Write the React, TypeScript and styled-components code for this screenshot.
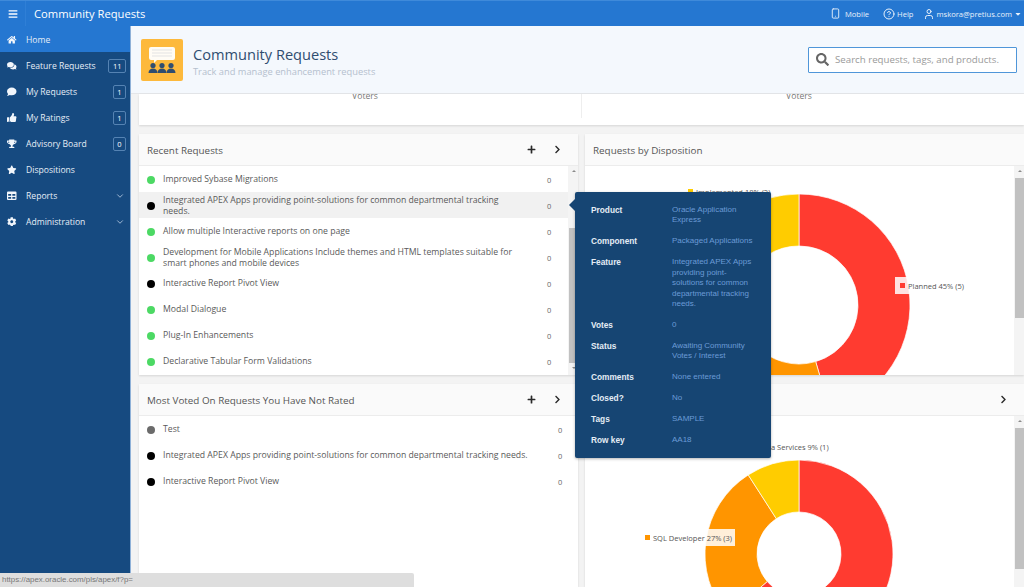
import React from "react";
import styled, { createGlobalStyle } from "styled-components";
import {
  FaHome, FaComments, FaComment, FaThumbsUp, FaTrophy, FaStar, FaTable, FaCog, FaBars, FaSearch, FaPlus, FaChevronRight, FaCaretDown,
} from "react-icons/fa";
import { LuChevronDown, LuCircleHelp, LuSmartphone, LuUser } from "react-icons/lu";

const Global = createGlobalStyle`
  html, body { margin: 0; padding: 0; height: 100%; overflow: hidden; }
  body { font-family: "Open Sans", "Liberation Sans", sans-serif; background: #f4f4f4; color: #404040; }
  * { box-sizing: border-box; }
`;

const Page = styled.div`
  width: 1024px;
  height: 587px;
  display: flex;
  flex-direction: column;
  overflow: hidden;
  position: relative;
`;

const TopBar = styled.header`
  height: 26px;
  flex-shrink: 0;
  display: flex;
  align-items: center;
  padding-right: 2px;
  background: #2577d1;
  color: #fff;
  border-top: 1px solid #3f8ada;
`;

const MenuToggle = styled.div`
  width: 26px;
  height: 25px;
  display: flex;
  align-items: center;
  justify-content: center;
  font-size: 10px;
  border-right: 1px solid #2f7fd6;
`;

const AppName = styled.div`
  margin-left: 8px;
  font-size: 11.2px;
  flex: 1;
`;

const TopLink = styled.div<{ $gap?: number }>`
  display: flex;
  align-items: center;
  gap: 2px;
  font-size: 7.6px;
  margin-right: ${(p) => p.$gap ?? 0}px;
  color: #e8f1fb;
`;

const Body = styled.div`
  flex: 1;
  display: flex;
  min-height: 0;
`;

const Sidebar = styled.nav`
  width: 131px;
  flex-shrink: 0;
  background: #164a80;
  border-right: 1px solid #8fb1d8;
`;

const NavItem = styled.div<{ $active?: boolean }>`
  height: 26px;
  display: flex;
  align-items: center;
  padding: 1px 4px 0 7px;
  color: #e6eef7;
  font-size: 8.6px;
  background: ${(p) => (p.$active ? "#2577d1" : "transparent")};
`;

const NavIcon = styled.span`
  width: 19px;
  display: flex;
  font-size: 9.5px;
  color: #f2f6fb;
`;

const NavLabel = styled.span`
  flex: 1;
`;

const NavBadge = styled.span`
  min-width: 12px;
  height: 14px;
  padding: 0 3.5px;
  border: 1px solid #5583b3;
  border-radius: 2px;
  font-size: 7.5px;
  line-height: 12px;
  text-align: center;
  color: #fff;
`;

const NavCaret = styled.span`
  display: flex;
  margin-right: 1px;
  font-size: 10px;
  color: #b8cde3;
`;

const Main = styled.main`
  flex: 1;
  min-width: 0;
  display: flex;
  flex-direction: column;
  background: #f3f3f3;
`;

const Hero = styled.div`
  height: 68px;
  flex-shrink: 0;
  display: flex;
  align-items: center;
  padding: 0 7px 0 10px;
  background: #f4f8fd;
  border-bottom: 1px solid #e4e6e9;
`;

const HeroIcon = styled.div`
  width: 42px;
  height: 42px;
  flex-shrink: 0;
  border-radius: 2px;
  background: #fdb93c;
  display: flex;
  align-items: center;
  justify-content: center;
`;

const HeroText = styled.div`
  margin: 2px 0 0 10px;
  flex: 1;
`;

const HeroTitle = styled.div`
  font-size: 14.6px;
  line-height: 22px;
  color: #2f4d70;
`;

const HeroSub = styled.div`
  font-size: 9.3px;
  line-height: 13px;
  color: #b4c0ce;
`;

const SearchBox = styled.div`
  width: 209px;
  height: 26px;
  display: flex;
  align-items: center;
  gap: 6px;
  padding-left: 7px;
  background: #fff;
  border: 1px solid #4f96d9;
  border-radius: 1px;
  font-size: 9.7px;
  color: #9a9a9a;
  white-space: nowrap;
  svg { color: #666; font-size: 13px; }
`;

const Content = styled.div`
  flex: 1;
  min-height: 0;
  padding: 0 0 0 8px;
  display: flex;
  flex-direction: column;
  gap: 9px;
`;

const StatsCard = styled.div`
  height: 31px;
  flex-shrink: 0;
  display: grid;
  grid-template-columns: 443px 1fr;
  background: #fff;
  box-shadow: 0 1px 2px rgba(0, 0, 0, 0.12);
`;

const StatCell = styled.div<{ $divider?: boolean }>`
  text-align: center;
  font-size: 8.6px;
  line-height: 4px;
  color: #777;
  height: 24px;
  padding: ${(p) => (p.$divider ? "0 0 0 10px" : "0 8px 0 0")};
  border-right: ${(p) => (p.$divider ? "1px solid #eee" : "none")};
  overflow: hidden;
`;

const Columns = styled.div`
  flex: 1;
  min-height: 0;
  display: grid;
  grid-template-columns: 439px 1fr;
  grid-template-rows: 241px 1fr;
  column-gap: 7px;
  row-gap: 9px;
`;

const Card = styled.section`
  position: relative;
  background: #fff;
  display: flex;
  flex-direction: column;
  min-height: 0;
  overflow: hidden;
  box-shadow: 0 1px 2px rgba(0, 0, 0, 0.12);
`;

const CardHead = styled.div`
  height: 32px;
  flex-shrink: 0;
  display: flex;
  align-items: center;
  padding: 0 16px 0 8px;
  background: #fafafa;
  border-bottom: 1px solid #ececec;
`;

const CardTitle = styled.h2`
  flex: 1;
  margin: 0;
  font-size: 9.85px;
  font-weight: 400;
  color: #555;
`;

const HeadIcon = styled.span`
  display: flex;
  margin-left: 17px;
  font-size: 9px;
  color: #2a2a2a;
`;

const CardBody = styled.div`
  flex: 1;
  min-height: 0;
  display: flex;
  position: relative;
  overflow: hidden;
`;

const List = styled.div`
  flex: 1;
  min-width: 0;
`;

const Row = styled.div<{ $hover?: boolean }>`
  height: 26px;
  display: flex;
  align-items: center;
  padding: 1px 0 0 8px;
  background: ${(p) => (p.$hover ? "#f1f1f1" : "transparent")};
`;

const Dot = styled.span<{ $color: string }>`
  width: 8px;
  height: 8px;
  flex-shrink: 0;
  border-radius: 50%;
  background: ${(p) => p.$color};
  margin-right: 8px;
`;

const RowText = styled.div<{ $gap?: number }>`
  flex: 1;
  min-width: 0;
  margin-right: ${(p) => p.$gap ?? 0}px;
  font-size: 8.7px;
  line-height: 10.4px;
  color: #5a5a5a;
`;

const RowCount = styled.div<{ $wide: number }>`
  width: ${(p) => p.$wide}px;
  flex-shrink: 0;
  font-size: 7.5px;
  color: #666;
`;

const Scroll = styled.div`
  width: 10px;
  flex-shrink: 0;
  display: flex;
  flex-direction: column;
  padding-left: 1px;
  background: #f4f4f4;
`;

const ScrollArrow = styled.div<{ $down?: boolean }>`
  height: 12px;
  flex-shrink: 0;
  position: relative;
  &::after {
    content: "";
    position: absolute;
    left: 3px;
    top: 4px;
    border-left: 2px solid transparent;
    border-right: 2px solid transparent;
    ${(p) => (p.$down ? "border-top: 2px solid #8a8a8a;" : "border-bottom: 2px solid #8a8a8a;")}
  }
`;

const ScrollTrack = styled.div`
  flex: 1;
  min-height: 0;
  display: flex;
  flex-direction: column;
`;

const ScrollGap = styled.div<{ $h: number }>`
  height: ${(p) => p.$h}px;
  flex-shrink: 0;
`;

const ScrollThumb = styled.div<{ $h: number }>`
  height: ${(p) => p.$h}px;
  flex-shrink: 0;
  background: #c1c1c1;
`;

const ChartArea = styled.div`
  flex: 1;
  min-width: 0;
  position: relative;
  overflow: hidden;
`;

const ChartLabel = styled.div<{ $x: number; $y: number; $bg?: boolean }>`
  position: absolute;
  left: ${(p) => p.$x}px;
  top: ${(p) => p.$y}px;
  display: flex;
  align-items: center;
  gap: 3px;
  height: 17px;
  padding: 0 3px 0 5px;
  font-size: 7.5px;
  white-space: nowrap;
  color: #555;
  background: ${(p) => (p.$bg ? "rgba(255,255,255,0.85)" : "transparent")};
`;

const Swatch = styled.span<{ $color: string }>`
  width: 5px;
  height: 5px;
  background: ${(p) => p.$color};
`;

const Pop = styled.aside`
  position: absolute;
  left: 575px;
  top: 192px;
  width: 196px;
  height: 266px;
  padding: 13px 16px 0;
  background: #164573;
  border-radius: 2px;
  box-shadow: 0 1px 3px rgba(0, 0, 0, 0.3);
  font-family: "Liberation Sans", Arial, sans-serif;
  line-height: 10.4px;
  &::before {
    content: "";
    position: absolute;
    left: -6px;
    top: 7px;
    border-top: 6px solid transparent;
    border-bottom: 6px solid transparent;
    border-right: 6px solid #164573;
  }
`;

const PopRow = styled.div`
  display: grid;
  grid-template-columns: 81px 1fr;
  margin-bottom: 10.6px;
`;

const PopKey = styled.div`
  font-size: 8.3px;
  color: #e4ecf5;
  font-weight: 700;
`;

const PopVal = styled.div`
  font-size: 8px;
  color: #6b9bd6;
`;

const StatusBubble = styled.div`
  position: absolute;
  left: 0;
  bottom: 0;
  width: 414px;
  height: 14px;
  padding-left: 2px;
  background: #dedede;
  border-top-right-radius: 2px;
  font-family: "Liberation Sans", Arial, sans-serif;
  font-size: 7.9px;
  line-height: 14px;
  color: #777;
`;

type Slice = { from: number; to: number; color: string };

const polar = (cx: number, cy: number, r: number, deg: number) => {
  const a = (deg * Math.PI) / 180;
  return [cx + r * Math.sin(a), cy - r * Math.cos(a)];
};

const slicePath = (cx: number, cy: number, r: number, inner: number, s: Slice) => {
  const [x1, y1] = polar(cx, cy, r, s.from);
  const [x2, y2] = polar(cx, cy, r, s.to);
  const [x3, y3] = polar(cx, cy, inner, s.to);
  const [x4, y4] = polar(cx, cy, inner, s.from);
  const large = s.to - s.from > 180 ? 1 : 0;
  return `M${x1} ${y1}A${r} ${r} 0 ${large} 1 ${x2} ${y2}L${x3} ${y3}A${inner} ${inner} 0 ${large} 0 ${x4} ${y4}Z`;
};

const Donut = ({ cx, cy, r, inner, w, h, slices }: { cx: number; cy: number; r: number; inner: number; w: number; h: number; slices: Slice[] }) => (
  <svg width={w} height={h} style={{ display: "block" }}>
    {slices.map((s) => (
      <path key={s.from} d={slicePath(cx, cy, r, inner, s)} fill={s.color} stroke="#fff" strokeWidth={0.7} />
    ))}
  </svg>
);

const RED = "#ff3b30";
const ORANGE = "#ff9500";
const GOLD = "#ffcc00";

const navItems = [
  { icon: <FaHome />, label: "Home", active: true },
  { icon: <FaComments />, label: "Feature Requests", badge: "11" },
  { icon: <FaComment />, label: "My Requests", badge: "1" },
  { icon: <FaThumbsUp />, label: "My Ratings", badge: "1" },
  { icon: <FaTrophy />, label: "Advisory Board", badge: "0" },
  { icon: <FaStar />, label: "Dispositions" },
  { icon: <FaTable />, label: "Reports", caret: true },
  { icon: <FaCog />, label: "Administration", caret: true },
];

const recent = [
  { text: "Improved Sybase Migrations", color: "#4cd964" },
  { text: "Integrated APEX Apps providing point-solutions for common departmental tracking needs.", color: "#000", hover: true },
  { text: "Allow multiple Interactive reports on one page", color: "#4cd964" },
  { text: "Development for Mobile Applications Include themes and HTML templates suitable for smart phones and mobile devices", color: "#4cd964" },
  { text: "Interactive Report Pivot View", color: "#000" },
  { text: "Modal Dialogue", color: "#4cd964" },
  { text: "Plug-In Enhancements", color: "#4cd964" },
  { text: "Declarative Tabular Form Validations", color: "#4cd964" },
];

const voted = [
  { text: "Test", color: "#6b6b6b" },
  { text: "Integrated APEX Apps providing point-solutions for common departmental tracking needs.", color: "#000" },
  { text: "Interactive Report Pivot View", color: "#000" },
];

const details: [string, string][] = [
  ["Product", "Oracle Application Express"],
  ["Component", "Packaged Applications"],
  ["Feature", "Integrated APEX Apps providing point-solutions for common departmental tracking needs."],
  ["Votes", "0"],
  ["Status", "Awaiting Community Votes / Interest"],
  ["Comments", "None entered"],
  ["Closed?", "No"],
  ["Tags", "SAMPLE"],
  ["Row key", "AA18"],
];

const Header = ({ title, actions }: { title: string; actions?: boolean }) => (
  <CardHead>
    <CardTitle>{title}</CardTitle>
    {actions && <HeadIcon><FaPlus /></HeadIcon>}
    {actions && <HeadIcon><FaChevronRight /></HeadIcon>}
  </CardHead>
);

const App = () => (
  <Page>
    <Global />
    <TopBar>
      <MenuToggle><FaBars /></MenuToggle>
      <AppName>Community Requests</AppName>
      <TopLink $gap={14}><LuSmartphone size={11} />&nbsp;Mobile</TopLink>
      <TopLink $gap={9}><LuCircleHelp size={12} />Help</TopLink>
      <TopLink>
        <LuUser size={12} />mskora@pretius.com<FaCaretDown size={8} />
      </TopLink>
    </TopBar>
    <Body>
      <Sidebar>
        {navItems.map((n) => (
          <NavItem key={n.label} $active={n.active}>
            <NavIcon>{n.icon}</NavIcon>
            <NavLabel>{n.label}</NavLabel>
            {n.badge && <NavBadge>{n.badge}</NavBadge>}
            {n.caret && <NavCaret><LuChevronDown /></NavCaret>}
          </NavItem>
        ))}
      </Sidebar>
      <Main>
        <Hero>
          <HeroIcon>
            <svg width="32" height="30" viewBox="0 0 32 30">
              <path d="M5 2h22a2 2 0 0 1 2 2v9a2 2 0 0 1-2 2H11l-3 3v-3H5a2 2 0 0 1-2-2V4a2 2 0 0 1 2-2z" fill="#fff" opacity="0.95" />
              <path d="M6 5h20M6 8h20M6 11h20" stroke="#e3e3e3" strokeWidth="1" />
              <g fill="#2f4d70">
                <circle cx="7" cy="20.500" r="2.600" />
                <circle cx="16" cy="20.500" r="2.600" />
                <circle cx="25" cy="20.500" r="2.600" />
                <path d="M2.500 28c0-3 2-4.500 4.500-4.500s4.500 1.500 4.500 4.500z" />
                <path d="M11.500 28c0-3 2-4.500 4.500-4.500s4.500 1.500 4.500 4.500z" />
                <path d="M20.500 28c0-3 2-4.500 4.500-4.500s4.500 1.500 4.500 4.500z" />
              </g>
            </svg>
          </HeroIcon>
          <HeroText>
            <HeroTitle>Community Requests</HeroTitle>
            <HeroSub>Track and manage enhancement requests</HeroSub>
          </HeroText>
          <SearchBox><FaSearch />Search requests, tags, and products.</SearchBox>
        </Hero>
        <Content>
          <StatsCard>
            <StatCell $divider>Voters</StatCell>
            <StatCell>Voters</StatCell>
          </StatsCard>
          <Columns>
            <Card>
              <Header title="Recent Requests" actions />
              <CardBody>
                <List>
                  {recent.map((r) => (
                    <Row key={r.text} $hover={r.hover}>
                      <Dot $color={r.color} />
                      <RowText $gap={30}>{r.text}</RowText>
                      <RowCount $wide={21}>0</RowCount>
                    </Row>
                  ))}
                </List>
                <Scroll>
                  <ScrollArrow />
                  <ScrollTrack>
                    <ScrollGap $h={50} />
                    <ScrollThumb $h={135} />
                  </ScrollTrack>
                  <ScrollArrow $down />
                </Scroll>
              </CardBody>
            </Card>
            <Card>
              <Header title="Requests by Disposition" />
              <CardBody>
                <ChartArea>
                  <Donut
                    cx={214} cy={139} r={111} inner={59} w={429} h={209}
                    slices={[
                      { from: 0, to: 163.6, color: RED },
                      { from: 163.6, to: 294.5, color: ORANGE },
                      { from: 294.5, to: 360, color: GOLD },
                    ]}
                  />
                  <ChartLabel $x={98} $y={17}><Swatch $color={GOLD} />Implemented 18% (2)</ChartLabel>
                  <ChartLabel $x={310} $y={111} $bg><Swatch $color={RED} />Planned 45% (5)</ChartLabel>
                </ChartArea>
                <Scroll>
                  <ScrollArrow />
                  <ScrollThumb $h={140} />
                </Scroll>
              </CardBody>
            </Card>
            <Card>
              <Header title="Most Voted On Requests You Have Not Rated" actions />
              <CardBody>
                <List>
                  {voted.map((r) => (
                    <Row key={r.text}>
                      <Dot $color={r.color} />
                      <RowText>{r.text}</RowText>
                      <RowCount $wide={20}>0</RowCount>
                    </Row>
                  ))}
                </List>
              </CardBody>
            </Card>
            <Card>
              <CardHead>
                <CardTitle>Requests by Product</CardTitle>
                <HeadIcon><FaChevronRight /></HeadIcon>
              </CardHead>
              <CardBody>
                <ChartArea>
                  <Donut
                    cx={214} cy={138} r={94} inner={42} w={429} h={172}
                    slices={[
                      { from: 0, to: 163.6, color: RED },
                      { from: 163.6, to: 229.1, color: RED },
                      { from: 229.1, to: 327.3, color: ORANGE },
                      { from: 327.3, to: 360, color: GOLD },
                    ]}
                  />
                  <ChartLabel $x={117} $y={22}><Swatch $color={GOLD} />Oracle REST Data Services 9% (1)</ChartLabel>
                  <ChartLabel $x={55} $y={113} $bg><Swatch $color={ORANGE} />SQL Developer 27% (3)</ChartLabel>
                </ChartArea>
                <Scroll>
                  <ScrollArrow />
                  <ScrollThumb $h={141} />
                </Scroll>
              </CardBody>
            </Card>
          </Columns>
        </Content>
      </Main>
    </Body>
    <Pop>
      {details.map(([k, v]) => (
        <PopRow key={k}>
          <PopKey>{k}</PopKey>
          <PopVal>{v}</PopVal>
        </PopRow>
      ))}
    </Pop>
    <StatusBubble>https://apex.oracle.com/pls/apex/f?p=</StatusBubble>
  </Page>
);

export default App;
